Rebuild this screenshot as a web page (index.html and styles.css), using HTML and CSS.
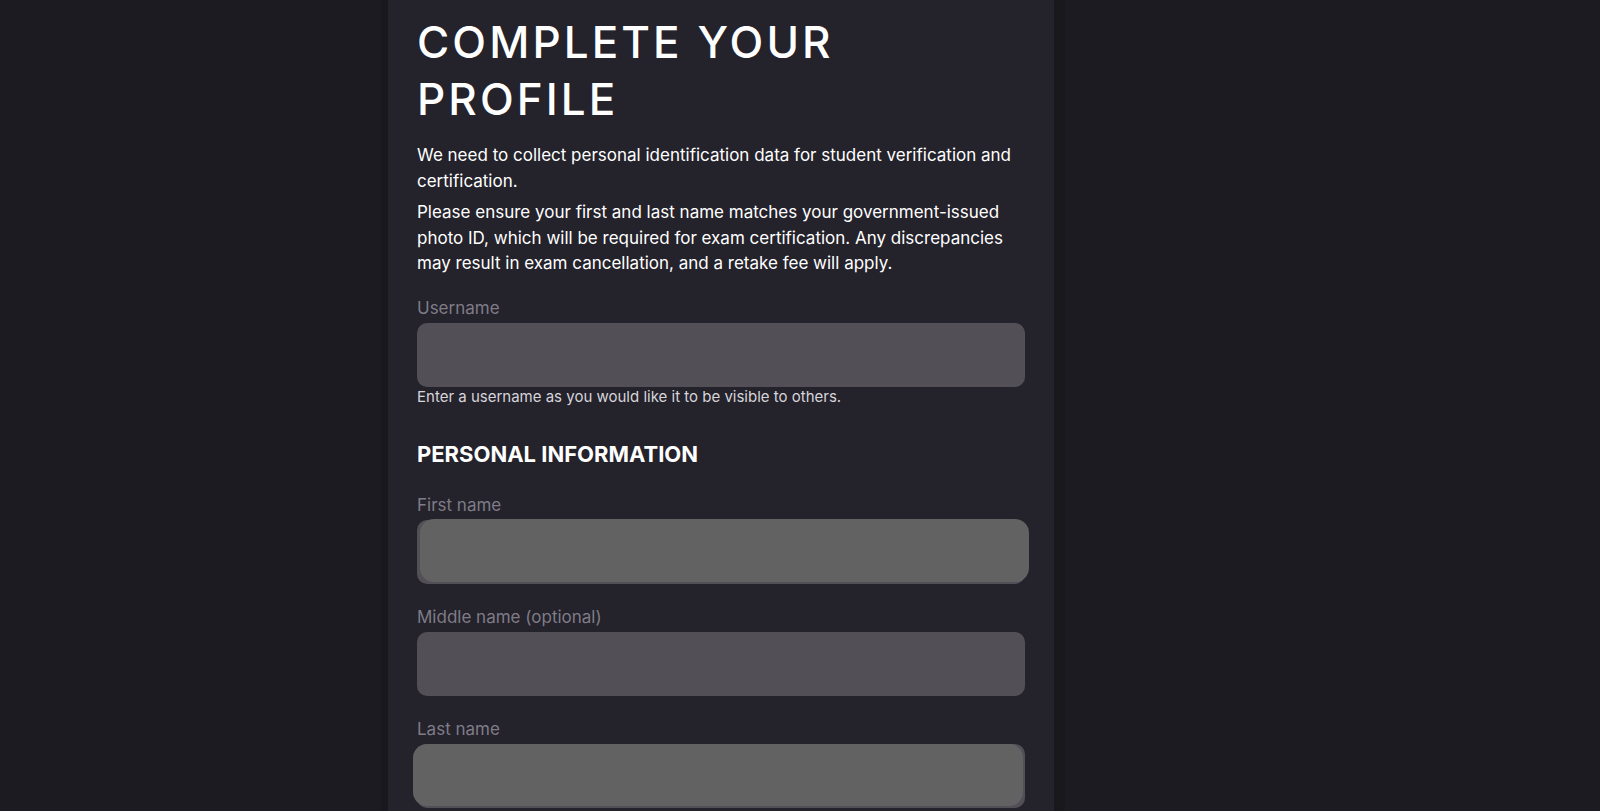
FILE: index.html
```html
<!DOCTYPE html>
<html lang="en">
<head>
<meta charset="utf-8">
<title>Complete your profile</title>
<link rel="stylesheet" href="styles.css">
</head>
<body>
<main class="panel">
  <h1 class="title">Complete your profile</h1>
  <div class="intro">
    <p class="intro-first">We need to collect personal identification data for student verification and certification.</p>
    <p class="intro-second">Please ensure your first and last name matches your government-issued photo ID, which will be required for exam certification. Any discrepancies may result in exam cancellation, and a retake fee will apply.</p>
  </div>

  <div class="field field-username">
    <label class="label" for="username">Username</label>
    <input class="input" id="username" type="text">
    <div class="helper">Enter a username as you would like it to be visible to others.</div>
  </div>

  <h2 class="section-title">Personal information</h2>

  <div class="field field-first">
    <label class="label" for="first">First name</label>
    <div class="input-wrap">
      <input class="input" id="first" type="text">
      <div class="redact redact-first"></div>
    </div>
  </div>

  <div class="field">
    <label class="label" for="middle">Middle name (optional)</label>
    <div class="input-wrap">
      <input class="input" id="middle" type="text">
    </div>
  </div>

  <div class="field">
    <label class="label" for="last">Last name</label>
    <div class="input-wrap">
      <input class="input" id="last" type="text">
      <div class="redact redact-last"></div>
    </div>
  </div>
</main>
</body>
</html>
```

FILE: styles.css
```css
html, body {
  margin: 0;
  padding: 0;
  height: 100%;
  overflow: hidden;
}

body {
  background: #1c1b21;
  font-family: Inter, "Noto Sans", "Liberation Sans", sans-serif;
  color: #ffffff;
}

.panel {
  box-sizing: border-box;
  margin-left: 388px;
  width: 666px;
  min-height: 811px;
  padding: 14px 29px 0;
  background: #24222b;
  box-shadow: -7px 0 0 #19181d, 11px 0 0 #19181d;
}

.title {
  margin: 0;
  max-width: 520px;
  font-size: 44px;
  line-height: 57px;
  font-weight: 500;
  letter-spacing: 0.07em;
  text-transform: uppercase;
  color: #ffffff;
}

.intro p {
  margin: 0;
  font-size: 17px;
  line-height: 25.5px;
  color: #ffffff;
}

.intro-first {
  padding-top: 15px;
}

.intro .intro-second {
  margin-top: 6px;
}

.field {
  margin-top: 21px;
}

.field-username {
  margin-top: 19px;
}

.label {
  display: block;
  font-size: 17px;
  line-height: 24px;
  color: #7f7c87;
  margin-bottom: 3px;
}

.input-wrap {
  position: relative;
}

.input {
  display: block;
  box-sizing: border-box;
  width: 100%;
  height: 64px;
  margin: 0;
  border: none;
  border-radius: 10px;
  background: #524f57;
  outline: none;
  font: inherit;
  color: #fff;
}

.helper {
  margin-top: 0;
  font-size: 15px;
  line-height: 20px;
  color: #d6d5da;
}

.section-title {
  margin: 32px 0 0;
  font-size: 22px;
  line-height: 30px;
  font-weight: 700;
  text-transform: uppercase;
  color: #ffffff;
}

.field-first {
  margin-top: 24px;
}

.redact {
  position: absolute;
  background: #626262;
  border-radius: 14px;
}

.redact-first {
  left: 3px;
  top: -1px;
  width: 609px;
  height: 63px;
}

.redact-last {
  left: -4px;
  top: 0;
  width: 610px;
  height: 62px;
}
```
